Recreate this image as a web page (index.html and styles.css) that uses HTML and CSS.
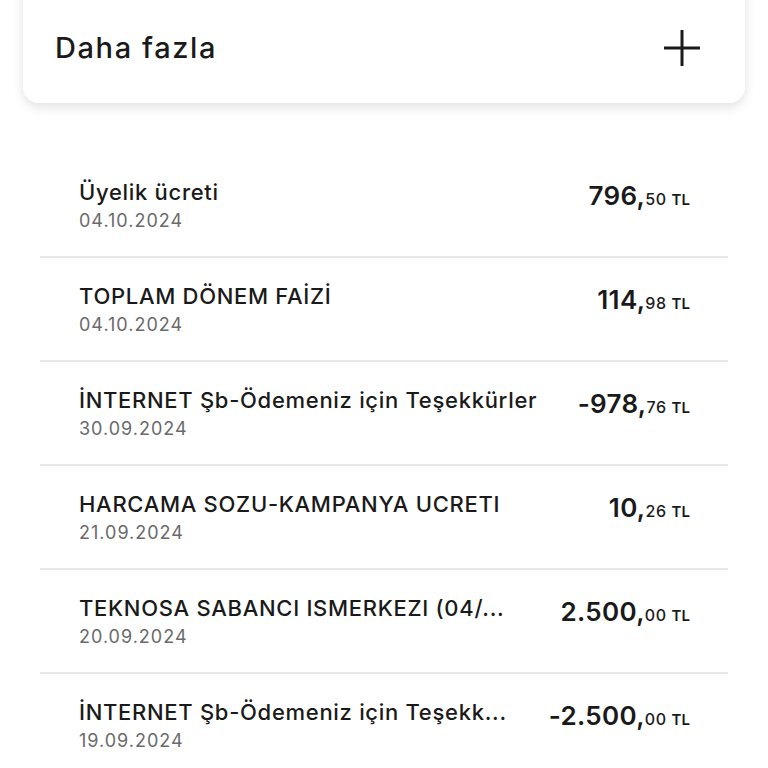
FILE: index.html
```html
<!DOCTYPE html>
<html lang="tr">
<head>
<meta charset="utf-8">
<link rel="stylesheet" href="styles.css">
</head>
<body>
<div class="page">
  <div class="card">
    <span class="card-title">Daha fazla</span>
    <svg class="plus" width="40" height="40" viewBox="0 0 40 40"><path d="M20 2V38M2 20H38" stroke="#1a1a1a" stroke-width="3" fill="none"/></svg>
  </div>
  <ul class="list">
    <li class="row">
      <div class="info"><div class="title">Üyelik ücreti</div><div class="date">04.10.2024</div></div>
      <div class="amount"><span class="int">796,</span><span class="dec">50</span><span class="cur">TL</span></div>
    </li>
    <li class="row">
      <div class="info"><div class="title">TOPLAM DÖNEM FAİZİ</div><div class="date">04.10.2024</div></div>
      <div class="amount"><span class="int">114,</span><span class="dec">98</span><span class="cur">TL</span></div>
    </li>
    <li class="row">
      <div class="info"><div class="title">İNTERNET Şb-Ödemeniz için Teşekkürler</div><div class="date">30.09.2024</div></div>
      <div class="amount"><span class="int">-978,</span><span class="dec">76</span><span class="cur">TL</span></div>
    </li>
    <li class="row">
      <div class="info"><div class="title">HARCAMA SOZU-KAMPANYA UCRETI</div><div class="date">21.09.2024</div></div>
      <div class="amount"><span class="int">10,</span><span class="dec">26</span><span class="cur">TL</span></div>
    </li>
    <li class="row">
      <div class="info"><div class="title">TEKNOSA SABANCI ISMERKEZI (04/...</div><div class="date">20.09.2024</div></div>
      <div class="amount"><span class="int">2.500,</span><span class="dec">00</span><span class="cur">TL</span></div>
    </li>
    <li class="row">
      <div class="info"><div class="title">İNTERNET Şb-Ödemeniz için Teşekk...</div><div class="date">19.09.2024</div></div>
      <div class="amount"><span class="int">-2.500,</span><span class="dec">00</span><span class="cur">TL</span></div>
    </li>
  </ul>
</div>
</body>
</html>
```
FILE: styles.css
```css
* { box-sizing: border-box; }
html, body { margin: 0; padding: 0; background: #ffffff; }
body {
  font-family: "Inter", "Noto Sans", sans-serif;
  color: #1a1a1a;
  width: 768px;
  height: 768px;
  overflow: hidden;
}
.page { padding: 0 23px 0 23px; }
.card {
  margin-top: -20px;
  height: 123px;
  background: #fff;
  border-radius: 0 0 16px 16px;
  box-shadow: 0 4px 12px rgba(0,0,0,0.12);
  display: flex;
  align-items: center;
  justify-content: space-between;
  padding: 12px 43px 0 32px;
}
.card-title {
  font-size: 29px;
  font-weight: 500;
  letter-spacing: 1.6px;
}
.plus { display: block; }
.list {
  list-style: none;
  margin: 51px 0 0 0;
  padding: 0 17px;
}
.row {
  height: 104px;
  border-bottom: 2px solid #e8e8e8;
  display: flex;
  align-items: center;
  gap: 40px;
  padding: 0 38px 0 39px;
}
.info { flex: 1; min-width: 0; }
.title {
  font-size: 22px;
  font-weight: 500;
  letter-spacing: 0.7px;
  white-space: nowrap;
  overflow: hidden;
  text-overflow: ellipsis;
  line-height: 30px;
}
.date {
  font-size: 18px;
  letter-spacing: 1px;
  color: #6a6a6a;
  line-height: 26px;
  margin-top: 1px;
}
.amount {
  white-space: nowrap;
  align-self: center;
  margin-bottom: 20px;
}
.int { font-size: 26px; font-weight: 600; letter-spacing: 0.3px; }
.dec { font-size: 16px; font-weight: 500; letter-spacing: 0.6px; }
.cur { font-size: 15px; font-weight: 600; margin-left: 5px; }
```
